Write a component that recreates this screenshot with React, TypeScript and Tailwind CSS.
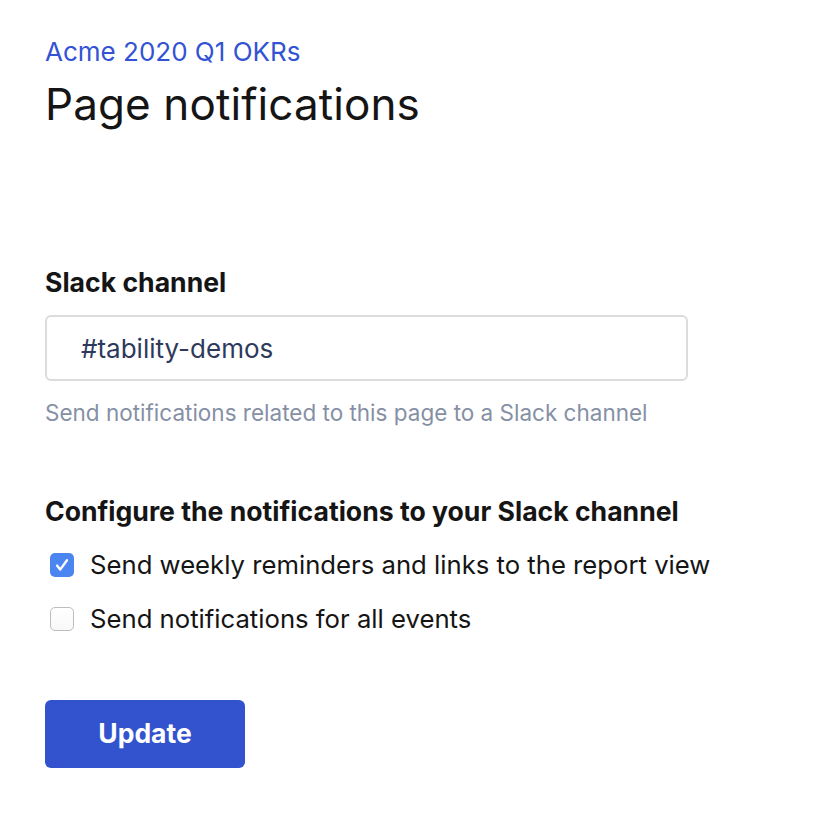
import React, { useState } from "react";

export default function App() {
  const [weekly, setWeekly] = useState(true);
  const [all, setAll] = useState(false);
  return (
    <div className="min-h-screen bg-white px-[45px] pt-[35px] text-[#151515]" style={{ fontFamily: "Inter, 'Noto Sans', sans-serif" }}>
      <a className="block text-[26px] leading-[34px] text-[#3353d4]">Acme 2020 Q1 OKRs</a>
      <h1 className="mt-[6px] text-[44px] leading-[58px] font-normal tracking-[0.1px] text-[#151515]">Page notifications</h1>

      <div className="mt-[132px]">
        <label className="block text-[26.6px] leading-[34px] font-bold">Slack channel</label>
        <div className="mt-[16px] flex h-[66px] w-[643px] items-center rounded-[6px] border-2 border-[#dcdcdc] px-[34px] text-[26px] text-[#2e3a5c]">
          #tability-demos
        </div>
        <p className="mt-[17px] text-[22.5px] leading-[30px] text-[#8690a5]">Send notifications related to this page to a Slack channel</p>
      </div>

      <div className="mt-[66px]">
        <h2 className="text-[26.6px] leading-[34px] font-bold">Configure the notifications to your Slack channel</h2>
        <div className="mt-[20px] flex flex-col gap-[20px]">
          <label className="flex items-center gap-[16px] text-[25.7px] leading-[34px]">
            <span
              onClick={() => setWeekly(!weekly)}
              className={`ml-[5px] flex h-[24px] w-[24px] items-center justify-center rounded-[5px] ${weekly ? "bg-[#4a85f0]" : "border-2 border-[#c4c4c4] bg-white"}`}
            >
              {weekly && (
                <svg width="16" height="16" viewBox="0 0 16 16" fill="none">
                  <path d="M3 8.6l3.2 4L13 3.2" stroke="white" strokeWidth="2.4" strokeLinecap="round" strokeLinejoin="round" />
                </svg>
              )}
            </span>
            Send weekly reminders and links to the report view
          </label>
          <label className="flex items-center gap-[16px] text-[25.7px] leading-[34px]">
            <span
              onClick={() => setAll(!all)}
              className={`ml-[5px] flex h-[24px] w-[24px] items-center justify-center rounded-[5px] ${all ? "bg-[#4a85f0]" : "border border-[#bdbdbd] bg-gradient-to-b from-white to-[#f8f8f8]"}`}
            />
            Send notifications for all events
          </label>
        </div>
      </div>

      <button className="mt-[64px] flex h-[68px] w-[200px] items-center justify-center rounded-[6px] bg-[#3352ce] text-[26.5px] font-bold text-white">
        Update
      </button>
    </div>
  );
}
